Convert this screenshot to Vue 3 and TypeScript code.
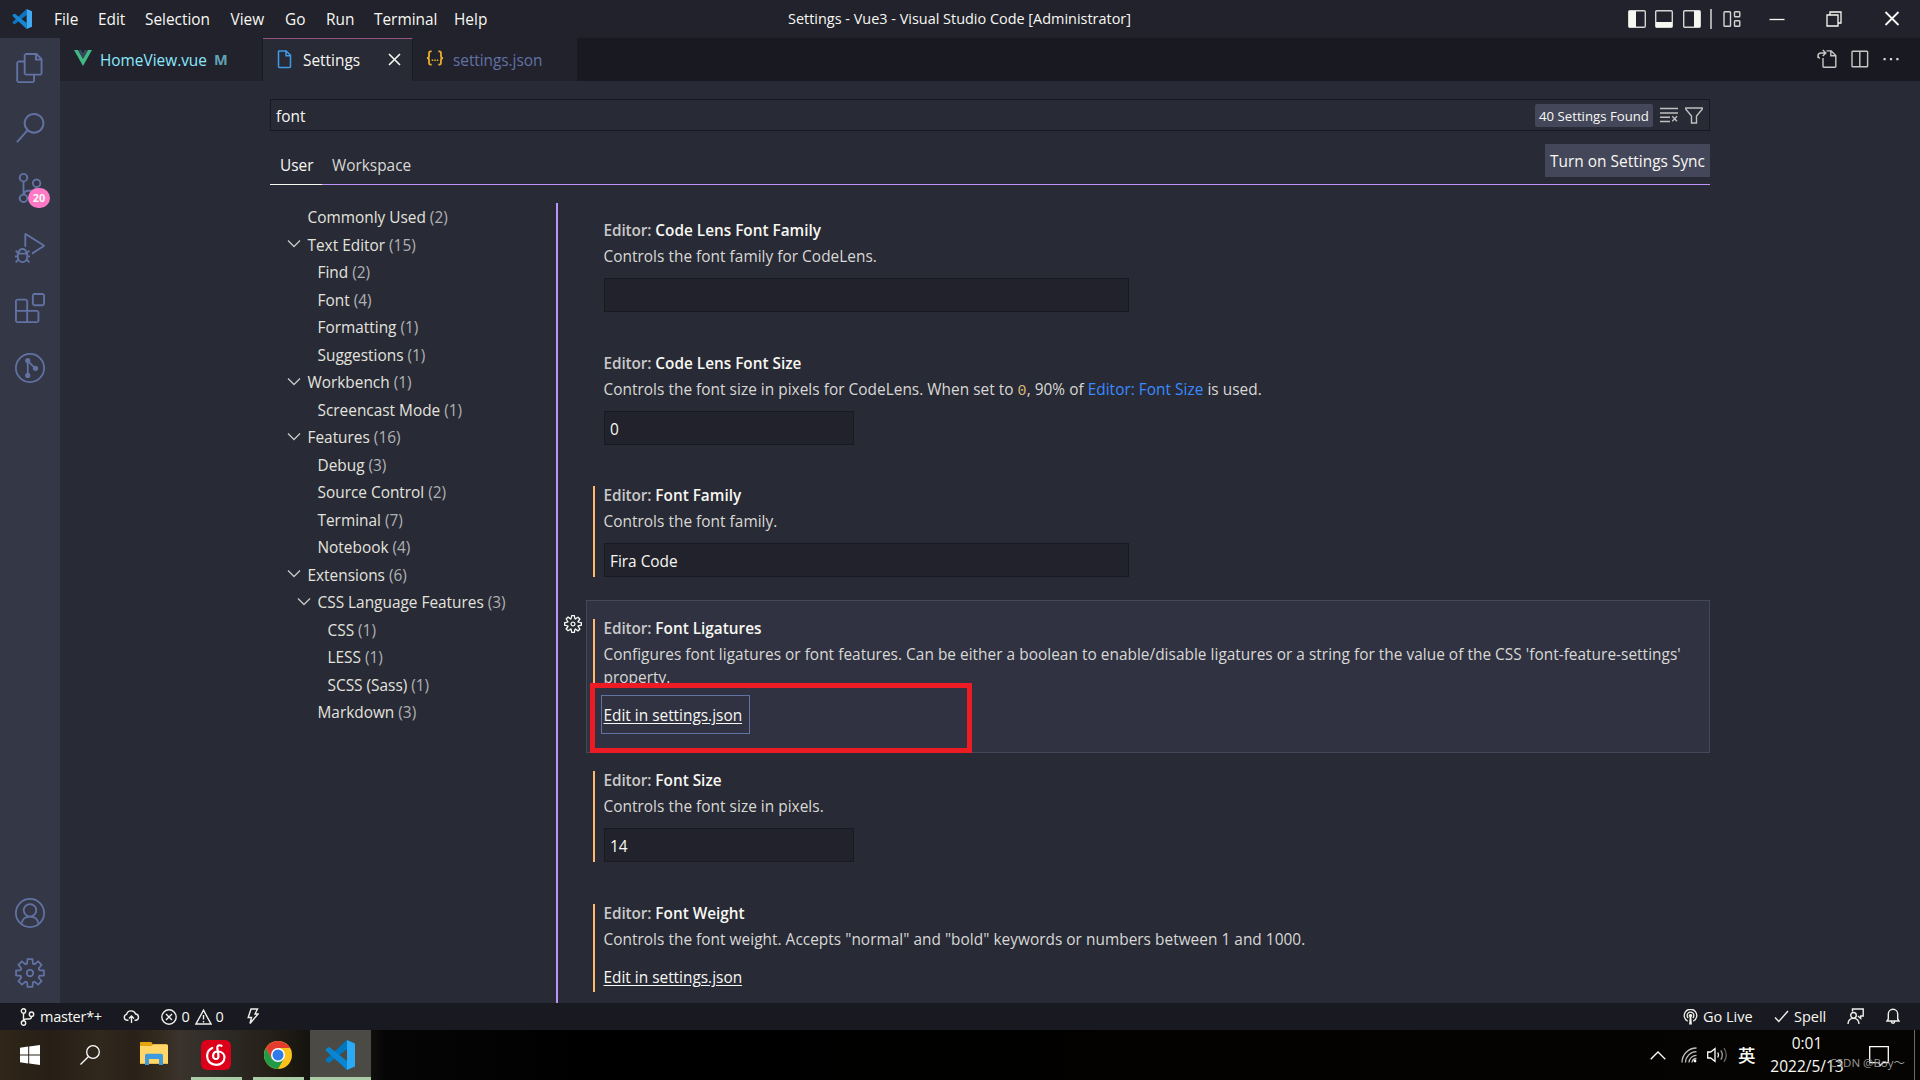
<script setup lang="ts">
interface MenuEntry { label: string; width: number }
interface TreeRow { label: string; count: number; level: number; open?: boolean }
interface Setting {
  name: string
  desc?: string
  value?: string
  kind: 'text' | 'number' | 'link'
  modified?: boolean
  focused?: boolean
  height: number
}

const menus: MenuEntry[] = [
  { label: 'File', width: 44 },
  { label: 'Edit', width: 47 },
  { label: 'Selection', width: 85.5 },
  { label: 'View', width: 54.5 },
  { label: 'Go', width: 41 },
  { label: 'Run', width: 48 },
  { label: 'Terminal', width: 80 },
  { label: 'Help', width: 50 },
]

const tree: TreeRow[] = [
  { label: 'Commonly Used', count: 2, level: 0 },
  { label: 'Text Editor', count: 15, level: 0, open: true },
  { label: 'Find', count: 2, level: 1 },
  { label: 'Font', count: 4, level: 1 },
  { label: 'Formatting', count: 1, level: 1 },
  { label: 'Suggestions', count: 1, level: 1 },
  { label: 'Workbench', count: 1, level: 0, open: true },
  { label: 'Screencast Mode', count: 1, level: 1 },
  { label: 'Features', count: 16, level: 0, open: true },
  { label: 'Debug', count: 3, level: 1 },
  { label: 'Source Control', count: 2, level: 1 },
  { label: 'Terminal', count: 7, level: 1 },
  { label: 'Notebook', count: 4, level: 1 },
  { label: 'Extensions', count: 6, level: 0, open: true },
  { label: 'CSS Language Features', count: 3, level: 1, open: true },
  { label: 'CSS', count: 1, level: 2 },
  { label: 'LESS', count: 1, level: 2 },
  { label: 'SCSS (Sass)', count: 1, level: 2 },
  { label: 'Markdown', count: 3, level: 1 },
]

const settings: Setting[] = [
  { name: 'Code Lens Font Family', desc: 'Controls the font family for CodeLens.', value: '', kind: 'text', height: 132.5 },
  { name: 'Code Lens Font Size', value: '0', kind: 'number', height: 132.5 },
  { name: 'Font Family', desc: 'Controls the font family.', value: 'Fira Code', kind: 'text', modified: true, height: 132 },
  {
    name: 'Font Ligatures',
    desc: "Configures font ligatures or font features. Can be either a boolean to enable/disable ligatures or a string for the value of the CSS 'font-feature-settings' property.",
    kind: 'link', modified: true, focused: true, height: 153,
  },
  { name: 'Font Size', desc: 'Controls the font size in pixels.', value: '14', kind: 'number', modified: true, height: 132.5 },
  { name: 'Font Weight', desc: 'Controls the font weight. Accepts "normal" and "bold" keywords or numbers between 1 and 1000.', kind: 'link', modified: true, height: 132.5 },
]

const activity: string[] = [
  'M17.5 0h-9L7 1.5V6H2.5L1 7.5v15.07L2.5 24h12.07L16 22.57V18h4.7l1.3-1.43V4.5L17.5 0zm0 2.12l2.38 2.38H17.5V2.12zm-3 20.38h-12v-15H7v9.07L8.5 18h6v4.5zm6-6h-12v-15H16V6h4.5v10.5z',
  'M15.25 0a8.25 8.25 0 0 0-6.18 13.72L1 22.88l1.12 1 8.05-9.12A8.251 8.251 0 1 0 15.25.01V0zm0 15a6.75 6.75 0 1 1 0-13.5 6.75 6.75 0 0 1 0 13.5z',
  'M21.007 8.222A3.738 3.738 0 0 0 15.045 5.2a3.737 3.737 0 0 0 1.156 6.583 2.988 2.988 0 0 1-2.668 1.67h-2.99a4.456 4.456 0 0 0-2.989 1.165V7.4a3.737 3.737 0 1 0-1.494 0v9.117a3.776 3.776 0 1 0 1.816.099 2.99 2.99 0 0 1 2.668-1.667h2.99a4.484 4.484 0 0 0 4.223-3.039 3.736 3.736 0 0 0 3.25-3.687zM4.565 3.738a2.242 2.242 0 1 1 4.484 0 2.242 2.242 0 0 1-4.484 0zm4.484 16.441a2.242 2.242 0 1 1-4.484 0 2.242 2.242 0 0 1 4.484 0zm8.221-9.715a2.242 2.242 0 1 1 0-4.485 2.242 2.242 0 0 1 0 4.485z',
  'M10.94 13.5l-1.32 1.32a3.73 3.73 0 0 0-7.24 0L1.06 13.5 0 14.56l1.72 1.72-.22.22V18H0v1.5h1.5v.08c.077.489.214.966.41 1.42L0 22.94 1.06 24l1.65-1.65A4.308 4.308 0 0 0 6 24a4.31 4.31 0 0 0 3.29-1.65L10.94 24 12 22.94 10.09 21c.198-.464.336-.951.41-1.45v-.1H12V18h-1.5v-1.5l-.22-.22L12 14.56l-1.06-1.06zM6 13.5a2.25 2.25 0 0 1 2.25 2.25h-4.5A2.25 2.25 0 0 1 6 13.5zm3 6a3.33 3.33 0 0 1-3 3 3.33 3.33 0 0 1-3-3v-2.25h6v2.25zm14.76-9.9v1.26L13.5 17.37V15.6l8.5-5.37L9 2v9.46a5.07 5.07 0 0 0-1.5-.72V.63L8.64 0l15.12 9.6z',
  'M13.5 1.5L15 0h7.5L24 1.5V9l-1.5 1.5H15L13.5 9V1.5zm1.5 0V9h7.5V1.5H15zM0 15V6l1.5-1.5H9L10.5 6v7.5H18l1.5 1.5v7.5L18 24H1.5L0 22.5V15zm9-1.5V6H1.5v7.5H9zM9 15H1.5v7.5H9V15zm1.5 7.5H18V15h-7.5v7.5z',
]

// Outline of an eight-toothed gear centred on 12,12.
const point = (deg: number, r: number): string => {
  const a = (deg * Math.PI) / 180
  return `${(12 + r * Math.sin(a)).toFixed(2)} ${(12 - r * Math.cos(a)).toFixed(2)}`
}
const gearPath =
  'M' +
  Array.from({ length: 8 }, (_, k) => k * 45)
    .flatMap((a) => [point(a - 17, 7.9), point(a - 10, 11.3), point(a + 10, 11.3), point(a + 17, 7.9)])
    .join('L') +
  'Z'

const smallGear =
  'M9.1 4.4L8.6 2H7.4l-.5 2.4-.7.3-2-1.3-.9.8 1.3 2-.2.7-2.4.5v1.2l2.4.5.3.8-1.3 2 .8.8 2-1.3.8.3.4 2.3h1.2l.5-2.4.8-.3 2 1.3.8-.8-1.3-2 .3-.8 2.3-.4V7.4l-2.4-.5-.3-.8 1.3-2-.8-.8-2 1.3-.7-.2zM9.4 1l.5 2.4L12 2.1l2 2-1.4 2.1 2.4.4v2.8l-2.4.5L14 12l-2 2-2.1-1.4-.5 2.4H6.6l-.5-2.4L4 13.9l-2-2 1.4-2.1L1 9.4V6.6l2.4-.5L2.1 4l2-2 2.1 1.4.4-2.4h2.8zm.6 7c0 1.1-.9 2-2 2s-2-.9-2-2 .9-2 2-2 2 .9 2 2zM8 9c.6 0 1-.4 1-1s-.4-1-1-1-1 .4-1 1 .4 1 1 1z'
</script>

<template>
  <div class="window">
    <header class="titlebar">
      <svg class="logo" viewBox="0 0 30 30">
        <path d="M22 0L1.200 19q-1.200 1 0 2.200l1.600 1.400q1 .6 2 0L22 9z" fill="#0f74bd" />
        <path d="M22 30L1.200 11q-1.200-1 0-2.200l1.600-1.400q1-.6 2 0L22 21z" fill="#1687d4" />
        <path d="M22 0v30l8-3.500v-23z" fill="#3fa9f2" />
      </svg>
      <nav class="menus">
        <span v-for="m in menus" :key="m.label" :style="{ width: m.width + 'px' }">{{ m.label }}</span>
      </nav>
      <div class="caption">Settings - Vue3 - Visual Studio Code [Administrator]</div>
      <div class="layout-icons">
        <svg viewBox="0 0 18 18"><rect x=".7" y=".7" width="16.6" height="16.6" rx="1.2" /><path class="solid" d="M1 1h7v16H1z" /></svg>
        <svg viewBox="0 0 18 18"><rect x=".7" y=".7" width="16.6" height="16.6" rx="1.2" /><path class="solid" d="M1 12h16v5H1z" /></svg>
        <svg viewBox="0 0 18 18"><rect x=".7" y=".7" width="16.6" height="16.6" rx="1.2" /><path class="solid" d="M11 1h6v16h-6z" /></svg>
        <i class="divider"></i>
        <svg viewBox="0 0 18 18"><rect x="1" y="1.7" width="6.500" height="14.6" rx=".8" /><rect x="11.500" y="1.7" width="5.300" height="5" rx=".8" /><rect x="11.500" y="10.8" width="5.300" height="5.4" rx=".8" /></svg>
      </div>
      <div class="window-icons">
        <svg viewBox="0 0 16 16"><path d="M.5 8.5h15" /></svg>
        <svg viewBox="0 0 16 16"><path d="M1 4h11v11H1zM4 4V1h11v11h-3" /></svg>
        <svg viewBox="0 0 16 16"><path d="M1.5 1l13 13M14.5 1l-13 13" stroke-width="1.8" /></svg>
      </div>
    </header>

    <main class="workbench">
      <aside class="activity">
        <div class="activity-group">
          <div v-for="(d, i) in activity" :key="i" class="activity-item">
            <svg viewBox="0 0 24 24"><path :d="d" /></svg>
            <b v-if="i === 2" class="badge">20</b>
          </div>
          <div class="activity-item">
            <svg viewBox="0 0 24 24">
              <circle cx="12" cy="12" r="11.3" class="line" />
              <path class="line" d="M10.2 6v12M10.2 6.3l6 6" />
              <circle cx="10.2" cy="6" r="2.1" /><circle cx="10.2" cy="17.9" r="2.1" /><circle cx="16.4" cy="12.2" r="2.1" />
            </svg>
          </div>
        </div>
        <div class="activity-group">
          <div class="activity-item">
            <svg viewBox="0 0 24 24">
              <circle cx="12" cy="12" r="11.3" class="line" />
              <circle cx="12" cy="9.8" r="5" class="line" />
              <path class="line" d="M5.2 20.6c.5-3.6 3.2-5.8 6.8-5.8s6.300 2.200 6.800 5.800" />
            </svg>
          </div>
          <div class="activity-item">
            <svg viewBox="0 0 24 24"><path class="line" :d="gearPath" /><circle cx="12" cy="12" r="2.6" class="line" /></svg>
          </div>
        </div>
      </aside>

      <section class="editor">
        <div class="tabs">
          <div class="tab home">
            <svg viewBox="0 0 18 18"><path d="M0 1h4l5 8.700L14 1h4L9 17z" fill="#42b883" /><path d="M4 1h3.200L9 4.200 10.800 1H14L9 9.700z" fill="#35495e" /></svg>
            <span>HomeView.vue</span><b>M</b>
          </div>
          <div class="tab active">
            <svg viewBox="0 0 15 19"><path d="M1.800 1h7.400l4.300 4.300V16.500a1 1 0 0 1-1 1H2.500a1 1 0 0 1-1-1V1.500zM9 1v4.800h4.500" fill="none" stroke="#3f9be8" stroke-width="1.500" /></svg>
            <span>Settings</span>
            <svg class="close" viewBox="0 0 13 13"><path d="M1 1l11 11M12 1L1 12" stroke="#f8f8f2" stroke-width="1.600" /></svg>
          </div>
          <div class="tab json">
            <svg viewBox="0 0 19 16"><path d="M6 1H4.800Q3.200 1 3.200 3v2.800Q3.200 8 1 8q2.200 0 2.200 2.200V13q0 2 1.600 2H6M13 1h1.200q1.600 0 1.600 2v2.800Q15.800 8 18 8q-2.200 0-2.200 2.200V13q0 2-1.600 2H13" fill="none" stroke="#e8ae2a" stroke-width="1.900" /><path d="M6 9.500h1.600v1.600H6zM8.700 9.500h1.600v1.600H8.700zM11.400 9.500H13v1.600h-1.600z" fill="#e8ae2a" /></svg>
            <span>settings.json</span>
          </div>
          <div class="tab-actions">
            <svg viewBox="0 0 20 20"><path d="M6 9v8.500a.8.800 0 0 0 .8.800H18a.8.800 0 0 0 .8-.8V6.500l-4.600-4.600H9.500M13.800 2v4.800h4.800M1 9V7q0-3 3-3h4.200M5.800 1l3 3-3 3M1 7.200l1.600 2.500" /></svg>
            <svg viewBox="0 0 18 18"><rect x="1" y="1.200" width="15.600" height="15.600" rx=".8" /><path d="M8.800 1v16" /></svg>
            <svg viewBox="0 0 18 18"><path class="solid" d="M1.500 8h2.200v2.200H1.500zM7.900 8h2.200v2.200H7.900zM14.300 8h2.200v2.200h-2.200z" /></svg>
          </div>
        </div>

        <div class="page">
          <div class="search">
            <span class="query">font</span>
            <span class="found">40 Settings Found</span>
            <svg class="clear" viewBox="0 0 18 16"><path d="M0 1.500h18M0 6h18M0 10.300h10M0 14.500h10M12.300 9.300l4.700 5M17 9.300l-4.700 5" /></svg>
            <svg class="filter" viewBox="0 0 18 17"><path d="M.8 1h16.400v1.300L11.500 9v7h-5V9L.8 2.300z" /></svg>
          </div>
          <div class="targets">
            <span class="target on">User</span>
            <span class="target">Workspace</span>
            <button>Turn on Settings Sync</button>
          </div>
          <div class="columns">
            <ul class="tree">
              <li v-for="row in tree" :key="row.label + row.level" :class="'level' + row.level">
                <svg viewBox="0 0 14 14"><path v-if="row.open" d="M1 3.500l6 6 6-6" /></svg>
                <span>{{ row.label }}</span><em>({{ row.count }})</em>
              </li>
            </ul>
            <div class="list">
              <article v-for="s in settings" :key="s.name" class="setting" :class="{ modified: s.modified, focused: s.focused }" :style="{ height: s.height + 'px' }">
                <svg v-if="s.focused" class="gear" viewBox="1 1 14 14"><path :d="smallGear" /></svg>
                <div class="setting-body">
                  <h3><span>Editor: </span>{{ s.name }}</h3>
                  <p v-if="s.desc">{{ s.desc }}</p>
                  <p v-else>Controls the font size in pixels for CodeLens. When set to <code>0</code>, 90% of <a>Editor: Font Size</a> is used.</p>
                  <div v-if="s.kind === 'link'" class="edit"><a>Edit in settings.json</a></div>
                  <div v-else class="field" :class="s.kind">{{ s.value }}</div>
                </div>
                <div v-if="s.focused" class="marker"></div>
              </article>
            </div>
          </div>
        </div>
      </section>
    </main>

    <footer class="status">
      <div class="status-left">
        <svg class="branch" viewBox="0 0 15 18"><circle cx="3.500" cy="3" r="2.200" /><circle cx="3.500" cy="15" r="2.200" /><circle cx="11.500" cy="6.200" r="2.200" /><path d="M3.500 5.200v7.600M11.500 8.400q0 2.600-3 2.600h-2q-3 0-3 2" /></svg>
        <span class="st-master">master*+</span>
        <svg class="cloud" viewBox="0 0 17 14"><path d="M5.500 10.300H4A3 3 0 0 1 3.600 4.400 4.700 4.700 0 0 1 12.600 4 3.200 3.200 0 0 1 13 10.300h-1.500M8.500 13V6.200M6 8.500l2.500-2.500L11 8.500" /></svg>
        <svg class="err" viewBox="0 0 16 16"><circle cx="8" cy="8" r="7.200" /><path d="M5 5l6 6M11 5l-6 6" /></svg>
        <span class="st-zero">0</span>
        <svg class="warn" viewBox="0 0 17 16"><path d="M8.500 1.200L16 15H1zM8.500 6v4.500M8.500 12v1.500" /></svg>
        <span class="st-zero">0</span>
        <svg class="bolt" viewBox="0 0 12 17"><path d="M4 1h6.500L8 6h3L3 15.500 4.500 9.500H1.200z" /></svg>
      </div>
      <div class="status-right">
        <svg class="live" viewBox="0 0 16 17"><path d="M5 12.900A6.700 6.700 0 1 1 11 12.900M5.500 9.500a3.600 3.600 0 1 1 5 0" /><path class="solid" d="M8 5.200a1.800 1.800 0 0 1 .9 3.400l.6 7.900h-3l.6-7.900A1.800 1.800 0 0 1 8 5.200z" /></svg>
        <span class="st-live">Go Live</span>
        <svg class="check" viewBox="0 0 15 13"><path d="M1 7.500l3.800 4L14 1" /></svg>
        <span class="st-spell">Spell</span>
        <svg class="feedback" viewBox="0 0 17 17"><path d="M5.500 3.500V1h10.700v7h-2.500v2.500L11 8" /><circle cx="6.500" cy="7.300" r="2.800" /><path d="M1 16q.3-5.600 5.500-5.600T12 16" /></svg>
        <svg class="bell" viewBox="0 0 14 17"><path d="M1 13h12l-1.300-2V6a4.700 4.700 0 0 0-9.400 0v5zM5.300 13.500a1.700 1.700 0 0 0 3.400 0" /></svg>
      </div>
    </footer>

    <footer class="taskbar">
      <svg class="start" viewBox="0 0 20 20"><path d="M0 2.800l8.200-1.200v7.900H0zM9.200 1.400L20 0v9.500H9.200zM0 10.500h8.200v7.900L0 17.200zM9.200 10.500H20V20L9.200 18.600z" fill="#fff" /></svg>
      <svg class="find" viewBox="0 0 20 20"><circle cx="13" cy="7" r="6.300" fill="none" stroke="#fff" stroke-width="1.300" /><path d="M8.500 11.500L.5 19.500" stroke="#fff" stroke-width="1.300" /></svg>
      <svg class="folder" viewBox="0 0 28 23">
        <path d="M0 .8Q0 0 .8 0h10.500l1.700 2.500H26.500Q28 2.500 28 4v17.500H0z" fill="#e5a50f" />
        <path d="M0 4h11.500L13.500 2.300h13Q28 2.300 28 4v17.800H0z" fill="#ffd667" />
        <path d="M5 23v-9.500q0-1.700 1.700-1.700h14.600q1.700 0 1.700 1.700V23h-4v-6H9v6z" fill="#3f9be0" />
      </svg>
      <div class="app music">
        <svg viewBox="0 0 30 30"><rect width="30" height="30" rx="6" fill="#dd001b" /><path d="M20.500 5.800C18.200 4.600 16 5.600 16.300 8l1.100 7.300c.4 2.400-.9 3.700-2.500 3.700-1.700 0-2.900-1.300-2.800-3.200.1-2.400 1.900-4.300 4.700-4.300 4.200 0 6.700 2.700 6.700 6 0 4.400-3.700 7.300-8.400 7.300-5.200 0-9-3.600-9-8.700 0-3.700 2-6.700 5.200-8.200" fill="none" stroke="#fff" stroke-width="2.200" stroke-linecap="round" /></svg>
      </div>
      <div class="app chrome">
        <svg viewBox="0 0 28 28">
          <circle cx="14" cy="14" r="14" fill="#fdc21b" />
          <path d="M1.880 7A14 14 0 0 0 14 28l6.060-10.500L14 14 7.940 17.500z" fill="#229a48" />
          <path d="M1.880 7L7.940 17.500 14 14 14 7H26.120A14 14 0 0 0 1.880 7z" fill="#e33b2e" />
          <circle cx="14" cy="14" r="7" fill="#fff" /><circle cx="14" cy="14" r="5.500" fill="#2f7bea" />
        </svg>
      </div>
      <div class="app code">
        <svg viewBox="0 0 30 30">
          <path d="M22 0L1.200 19q-1.200 1 0 2.200l1.600 1.400q1 .6 2 0L22 9z" fill="#0078c1" />
          <path d="M22 30L1.200 11q-1.200-1 0-2.200l1.600-1.400q1-.6 2 0L22 21z" fill="#0a85d1" />
          <path d="M22 0v30l8-3.500v-23z" fill="#2aa9f5" />
        </svg>
      </div>
      <div class="tray">
        <svg class="up" viewBox="0 0 16 9"><path d="M.7 8.200L8 1l7.300 7.200" /></svg>
        <svg class="wifi" viewBox="0 0 16 16"><path opacity=".75" d="M1 15.500A14.500 14.500 0 0 1 15.500 1M4.500 15.500A11 11 0 0 1 15.500 4.700M8 15.500a7.500 7.500 0 0 1 7.500-7.200M11 15.500a4.500 4.500 0 0 1 4.500-4" /><circle class="solid" cx="14" cy="14" r="1.400" /></svg>
        <svg class="sound" viewBox="0 0 21 18"><path d="M.7 6h3L8 2.500v13L3.700 12h-3z" /><path d="M10.800 6.500q1.500 2.500 0 5" /><path opacity=".6" d="M13.800 4.300q3 4.700 0 9.400" /><path opacity=".4" d="M17 2q4.500 7 0 14" /></svg>
        <span class="ime">英</span>
        <div class="clock"><span>0:01</span><span>2022/5/13</span></div>
        <svg class="notice" viewBox="0 0 20 21"><path d="M.7.7h18.600v16H14l-3 3-1-3H.7z" /></svg>
        <i class="edge"></i>
        <span class="watermark">CSDN @Boy～</span>
      </div>
    </footer>
  </div>
</template>

<style>
body {
  margin: 0;
  overflow: hidden;
  background: #191a21;
}
</style>

<style scoped>
.window {
  width: 1920px;
  height: 1080px;
  display: flex;
  flex-direction: column;
  overflow: hidden;
  color: #f8f8f2;
  font-family: "Open Sans", "Noto Sans", "Noto Sans CJK SC", sans-serif;
  font-size: 15.4px;
  white-space: nowrap;
}
svg { flex: none; display: block; }
.titlebar {
  position: relative;
  height: 38px;
  flex: none;
  display: flex;
  align-items: center;
  background: #21222c;
}
.logo { width: 20px; height: 20px; margin: 0 22px 0 12px; }
.menus { display: flex; }
.menus span { box-sizing: border-box; }
.caption {
  position: absolute;
  left: 0;
  right: 1px;
  padding-bottom: 2px;
  text-align: center;
  font-size: 14.450px;
}
.layout-icons { margin-left: auto; display: flex; align-items: center; }
.layout-icons svg { width: 18px; height: 18px; margin-right: 9.500px; fill: none; stroke: #d5d5d2; stroke-width: 1.400; }
.layout-icons svg .solid { fill: #f8f8f2; stroke: none; }
.layout-icons svg:last-child { margin-right: 28px; }
.divider { width: 2px; height: 20px; margin-right: 11px; background: #a9a9a8; }
.window-icons { display: flex; gap: 42px; margin-right: 21px; }
.window-icons svg { width: 16px; height: 16px; fill: none; stroke: #f8f8f2; stroke-width: 1.300; }
.window-icons { gap: 41.500px; margin-right: 20.500px; }
.layout-icons svg:last-child { margin-right: 27.500px; }

.workbench { height: 965px; flex: none; display: flex; }
.activity {
  width: 60px;
  flex: none;
  display: flex;
  flex-direction: column;
  justify-content: space-between;
  background: #343746;
}
.activity-item { position: relative; height: 60px; display: flex; align-items: center; justify-content: center; }
.activity-item svg { width: 30px; height: 30px; fill: #6272a4; }
.activity-item .line { fill: none; stroke: #6272a4; stroke-width: 1.400; }
.badge {
  position: absolute;
  left: 28px;
  top: 30px;
  width: 22px;
  height: 20px;
  border-radius: 10px;
  background: #ff79c6;
  font-size: 10.800px;
  line-height: 20px;
  text-align: center;
  font-weight: 700;
}

.editor { flex: 1; display: flex; flex-direction: column; background: #282a36; }
.tabs { height: 43px; flex: none; display: flex; background: #191a21; }
.tab {
  box-sizing: border-box;
  height: 43px;
  display: flex;
  align-items: center;
  background: #21222c;
  border-right: 1px solid #191a21;
}
.tab span { padding-top: 2px; }
.home { width: 203px; padding-left: 14px; color: #8be9fd; }
.home svg { width: 18px; height: 18px; margin: 0 8px 3px 0; }
.home b { margin-left: 7px; font-size: 14.500px; font-weight: 700; color: #62a3b5; }
.active { width: 150px; padding-left: 14px; background: #282a36; border-top: 1px solid #94527e; }
.active span { padding-top: 1px; }
.active svg { width: 15px; height: 19px; margin-right: 11px; margin-bottom: 2px; }
.active .close { width: 13px; height: 13px; margin: 0 0 2px auto; position: relative; right: 11px; }
.json { width: 164px; padding-left: 13px; color: #6272a4; border-right: 0; }
.json svg { width: 18px; height: 16px; margin-right: 9px; margin-bottom: 3px; }
.json span { letter-spacing: -0.05px; }
.tab-actions { margin-left: auto; display: flex; align-items: center; gap: 13.500px; margin-right: 20px; }
.tab-actions svg { width: 18px; height: 18px; fill: none; stroke: #c8c8c6; stroke-width: 1.400; margin-bottom: 1px; }
.tab-actions svg:first-child { width: 20px; height: 20px; }
.tab-actions .solid { fill: #d5d5d2; stroke: none; }

.page { height: 922px; margin: 0 210px; display: flex; flex-direction: column; overflow: hidden; }
.search {
  box-sizing: border-box;
  height: 32px;
  flex: none;
  margin-top: 18px;
  padding: 0 6px 0 5px;
  display: flex;
  align-items: center;
  border: 1px solid #191a21;
}
.query { flex: 1; padding-top: 2px; }
.found {
  width: 118px;
  height: 23px;
  margin-right: 7px;
  border-radius: 2px;
  background: #44475a;
  font-size: 13.200px;
  line-height: 24px;
  text-align: center;
}
.search svg { fill: none; stroke: #c0c0bf; stroke-width: 1.400; }
.clear { width: 18px; height: 16px; margin-right: 7px; }
.filter { width: 18px; height: 17px; }
.targets {
  box-sizing: border-box;
  height: 54px;
  flex: none;
  display: flex;
  align-items: flex-start;
  padding-top: 13px;
  border-bottom: 1px solid #bd93f9;
}
.target { box-sizing: border-box; height: 41px; padding: 10px 10px 0; line-height: 24px; color: #d8d8d4; }
.target.on { width: 52px; color: #f8f8f2; border-bottom: 1px solid #f8f8f2; }
.targets button {
  width: 165px;
  height: 33px;
  margin: 0 0 0 auto;
  padding: 2px 0 0;
  border: 0;
  background: #44475a;
  color: #f8f8f2;
  font: inherit;
  letter-spacing: 0.03px;
}
.columns { flex: 1; min-height: 0; display: flex; margin-top: 18px; }
.tree { width: 286px; flex: none; margin: 0; padding: 0; list-style: none; border-right: 2px solid #bd93f9; }
.tree li { height: 27.500px; display: flex; align-items: center; padding-left: 17px; color: #e3e3de; }
.tree li.level1 { padding-left: 27px; }
.tree li.level2 { padding-left: 37px; }
.tree span, .tree em { padding-top: 2px; }
.tree svg { width: 14px; height: 14px; margin-right: 6.500px; fill: none; stroke: #c8c8c6; stroke-width: 1.300; }
.tree em { margin-left: 4px; font-style: normal; color: #b0b1b2; }

.list { width: 1124px; flex: none; margin-left: 28px; }
.setting { position: relative; box-sizing: border-box; padding: 18px 7px 0; }
.setting-body { display: flow-root; padding-left: 10.500px; }
.modified .setting-body { padding-left: 8.500px; border-left: 2px solid #ffb86c; }
.focused { padding: 18px 6px 0; border: 1px solid #44475a; background: #303241; }
.gear { position: absolute; left: -23.500px; top: 14px; width: 18px; height: 18px; fill: #f8f8f2; }
.setting h3 { margin: 0 0 6px; font-size: 15.350px; line-height: 18px; font-weight: 600; color: #f8f8f2; }
.setting h3 span { letter-spacing: -0.1px; color: #c8c9c9; }
.setting p { margin: 0; line-height: 23.400px; letter-spacing: 0.03px; white-space: normal; color: #d8d8d5; }
.setting p a { color: #3a8bff; }
.setting code { font-family: "Liberation Mono", monospace; font-size: 15px; line-height: 1; color: #d6b67a; }
.field {
  box-sizing: border-box;
  height: 34px;
  margin-top: 9.600px;
  padding-left: 5.500px;
  border: 1px solid #191a21;
  background: #21222c;
  line-height: 35px;
}
.field.text { width: 525.500px; }
.field.number { width: 250.500px; }
.edit { height: 30.500px; margin-top: 11px; line-height: 32px; color: #f8f8f2; }
.edit a { position: relative; text-decoration: underline; text-underline-offset: 2px; }
.focused .edit { line-height: 30px; }
.focused .edit a::after {
  content: "";
  position: absolute;
  left: -3px;
  top: -10px;
  width: 147px;
  height: 37px;
  border: 1px solid #6272a4;
}
.marker {
  position: absolute;
  left: 3px;
  top: 82px;
  box-sizing: border-box;
  width: 382px;
  height: 70px;
  border: 5px solid #ed1c24;
}

.status { height: 27px; flex: none; display: flex; justify-content: space-between; background: #191a21; font-size: 14.500px; }
.status span { padding-bottom: 1px; }
.status svg { fill: none; stroke: #f0f0ea; stroke-width: 1.400; }
.status .solid { fill: #f0f0ea; stroke: none; }
.status-left, .status-right { display: flex; align-items: center; }
.branch { width: 15px; height: 18px; margin: 0 5px 0 20px; }
.st-master { width: 82.500px; letter-spacing: -0.25px; }
.cloud { width: 17px; height: 14px; margin-right: 21px; }
.err { width: 16px; height: 16px; margin-right: 5px; }
.st-zero { width: 13px; }
.warn { width: 17px; height: 16px; margin-right: 4px; }
.bolt { width: 12px; height: 17px; margin-left: 18px; }
.live { width: 15px; height: 16px; margin-right: 5px; }
.st-live { width: 71px; }
.check { width: 15px; height: 13px; margin-right: 5px; }
.st-spell { width: 53px; }
.feedback { width: 17px; height: 17px; margin-right: 22px; }
.bell { width: 14px; height: 17px; margin-right: 20px; }

.taskbar {
  height: 50px;
  flex: none;
  display: flex;
  align-items: center;
  background: linear-gradient(90deg, #302619 0, #271f16 50px, #30281c 100px, #2a2219 135px, #342b1f 160px, #3a332c 180px, #2e2b26 220px, #252018 270px, #15130e 310px, #11100d 370px, #050505 385px, #000 600px, #030201 1200px, #050402 1920px);
}
.start { width: 20px; height: 20px; margin-left: 20px; }
.find { width: 20px; height: 20px; margin-left: 40px; }
.folder { width: 28px; height: 23px; margin: 0 23px 3px 40px; }
.app { box-sizing: border-box; height: 50px; display: flex; align-items: center; justify-content: center; border-bottom: 3px solid #a9cba5; padding-top: 3px; }
.music { width: 51px; }
.music svg { width: 30px; height: 30px; margin-right: 1px; }
.chrome { width: 51px; margin-left: 11px; }
.chrome svg { width: 28px; height: 28px; margin-right: 1px; }
.code { width: 61px; margin-left: 6px; background: #4b4a45; }
.code svg { width: 30px; height: 30px; margin-right: 1px; }
.tray { position: relative; margin-left: auto; height: 50px; display: flex; align-items: center; }
.tray svg { fill: none; stroke: #fff; stroke-width: 1.300; }
.tray .solid { fill: #fff; stroke: none; }
.up { width: 16px; height: 9px; margin-right: 15px; }
.wifi { width: 16px; height: 16px; margin-right: 10px; }
.sound { width: 21px; height: 18px; margin-right: 10px; }
.ime { width: 18px; padding-bottom: 2px; font-size: 17.500px; font-weight: 500; font-family: "Noto Sans CJK SC", sans-serif; }
.clock { width: 102px; display: flex; flex-direction: column; align-items: center; font-size: 15.500px; line-height: 23px; }
.notice { width: 20px; height: 21px; margin: 2px 25px 0 11px; }
.edge { width: 1px; height: 50px; margin-right: 5px; background: #6b6b6b; }
.watermark { position: absolute; right: 15px; top: 24px; font-size: 11.500px; line-height: 17px; color: #9a9a9a; }
</style>
